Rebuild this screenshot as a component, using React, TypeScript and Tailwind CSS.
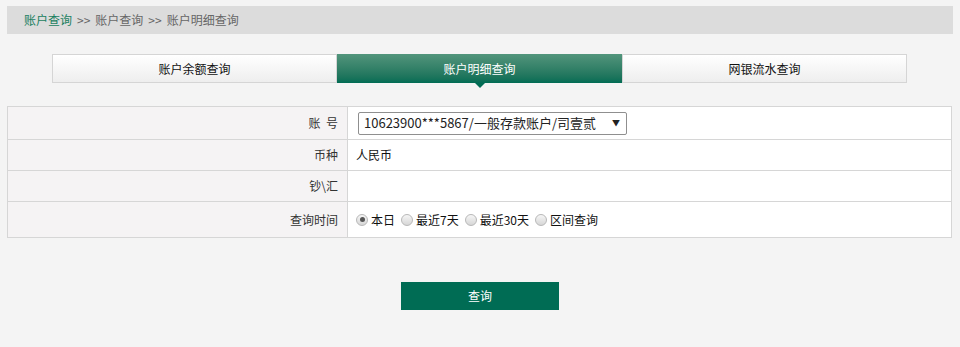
const font = { fontFamily: '"Noto Sans CJK SC", "Liberation Sans", sans-serif' };

function Radio({ label, checked }: { label: string; checked?: boolean }) {
  return (
    <span className="flex items-center gap-[3px] mr-[6px]">
      <span className="w-[12px] h-[12px] rounded-full border border-[#b8b8b8] bg-gradient-to-b from-[#f6f6f6] to-[#d6d6d6] flex items-center justify-center">
        {checked && <span className="w-[5px] h-[5px] rounded-full bg-[#555]" />}
      </span>
      <span>{label}</span>
    </span>
  );
}

function Row({ label, children, h }: { label: string; children?: React.ReactNode; h: string }) {
  return (
    <div className={`flex border-t border-[#d6d6d6] first:border-t-0 ${h}`}>
      <div className="w-[340px] shrink-0 bg-[#f5f3f4] border-r border-[#d6d6d6] flex items-center justify-end pr-[9px] text-[#333] whitespace-pre">
        {label}
      </div>
      <div className="flex-1 bg-white flex items-center pl-[8px] text-[#111]">{children}</div>
    </div>
  );
}

export default function App() {
  const tabs = ["账户余额查询", "账户明细查询", "网银流水查询"];
  return (
    <div className="w-[960px] h-[347px] bg-[#f4f4f4] pt-[6px] px-[7px] text-[12px]" style={font}>
      <div className="h-[28px] bg-[#dcdcdc] flex items-center pl-[17px] text-[#666]">
        <span className="text-[#1a7f5f]">账户查询</span>
        <span className="mx-[5px]">&gt;&gt;</span>
        <span>账户查询</span>
        <span className="mx-[5px]">&gt;&gt;</span>
        <span>账户明细查询</span>
      </div>

      <div className="mt-[20px] ml-[45px] w-[855px] h-[29px] flex">
        {tabs.map((t, i) =>
          i === 1 ? (
            <div
              key={t}
              className="relative w-[285px] flex items-center justify-center text-white bg-gradient-to-b from-[#52957c] to-[#006c54]"
            >
              {t}
              <span className="absolute left-1/2 -translate-x-1/2 top-full w-0 h-0 border-l-[5px] border-r-[5px] border-t-[5px] border-l-transparent border-r-transparent border-t-[#006c54]" />
            </div>
          ) : (
            <div
              key={t}
              className="w-[285px] flex items-center justify-center text-[#111] border border-[#d5d5d5] bg-gradient-to-b from-white to-[#eeeeee]"
            >
              {t}
            </div>
          )
        )}
      </div>

      <div className="mt-[23px] w-[945px] border border-[#d6d6d6]">
        <Row label="账  号" h="h-[32px]">
          <div className="ml-[2px] w-[269px] h-[23px] border border-[#8f8f8f] rounded-[2px] bg-white flex items-center justify-between pl-[5px] pr-[6px] text-[13px] text-[#222] whitespace-nowrap">
            <span>10623900***5867/一般存款账户/司壹贰</span>
            <span className="text-[8px]">▼</span>
          </div>
        </Row>
        <Row label="币种" h="h-[31px]">人民币</Row>
        <Row label="钞\汇" h="h-[31px]" />
        <Row label="查询时间" h="h-[36px]">
          <div className="flex items-center">
            <Radio label="本日" checked />
            <Radio label="最近7天" />
            <Radio label="最近30天" />
            <Radio label="区间查询" />
          </div>
        </Row>
      </div>

      <div className="mt-[44px] flex justify-center">
        <button className="w-[158px] h-[28px] bg-[#006c54] text-white">查询</button>
      </div>
    </div>
  );
}
